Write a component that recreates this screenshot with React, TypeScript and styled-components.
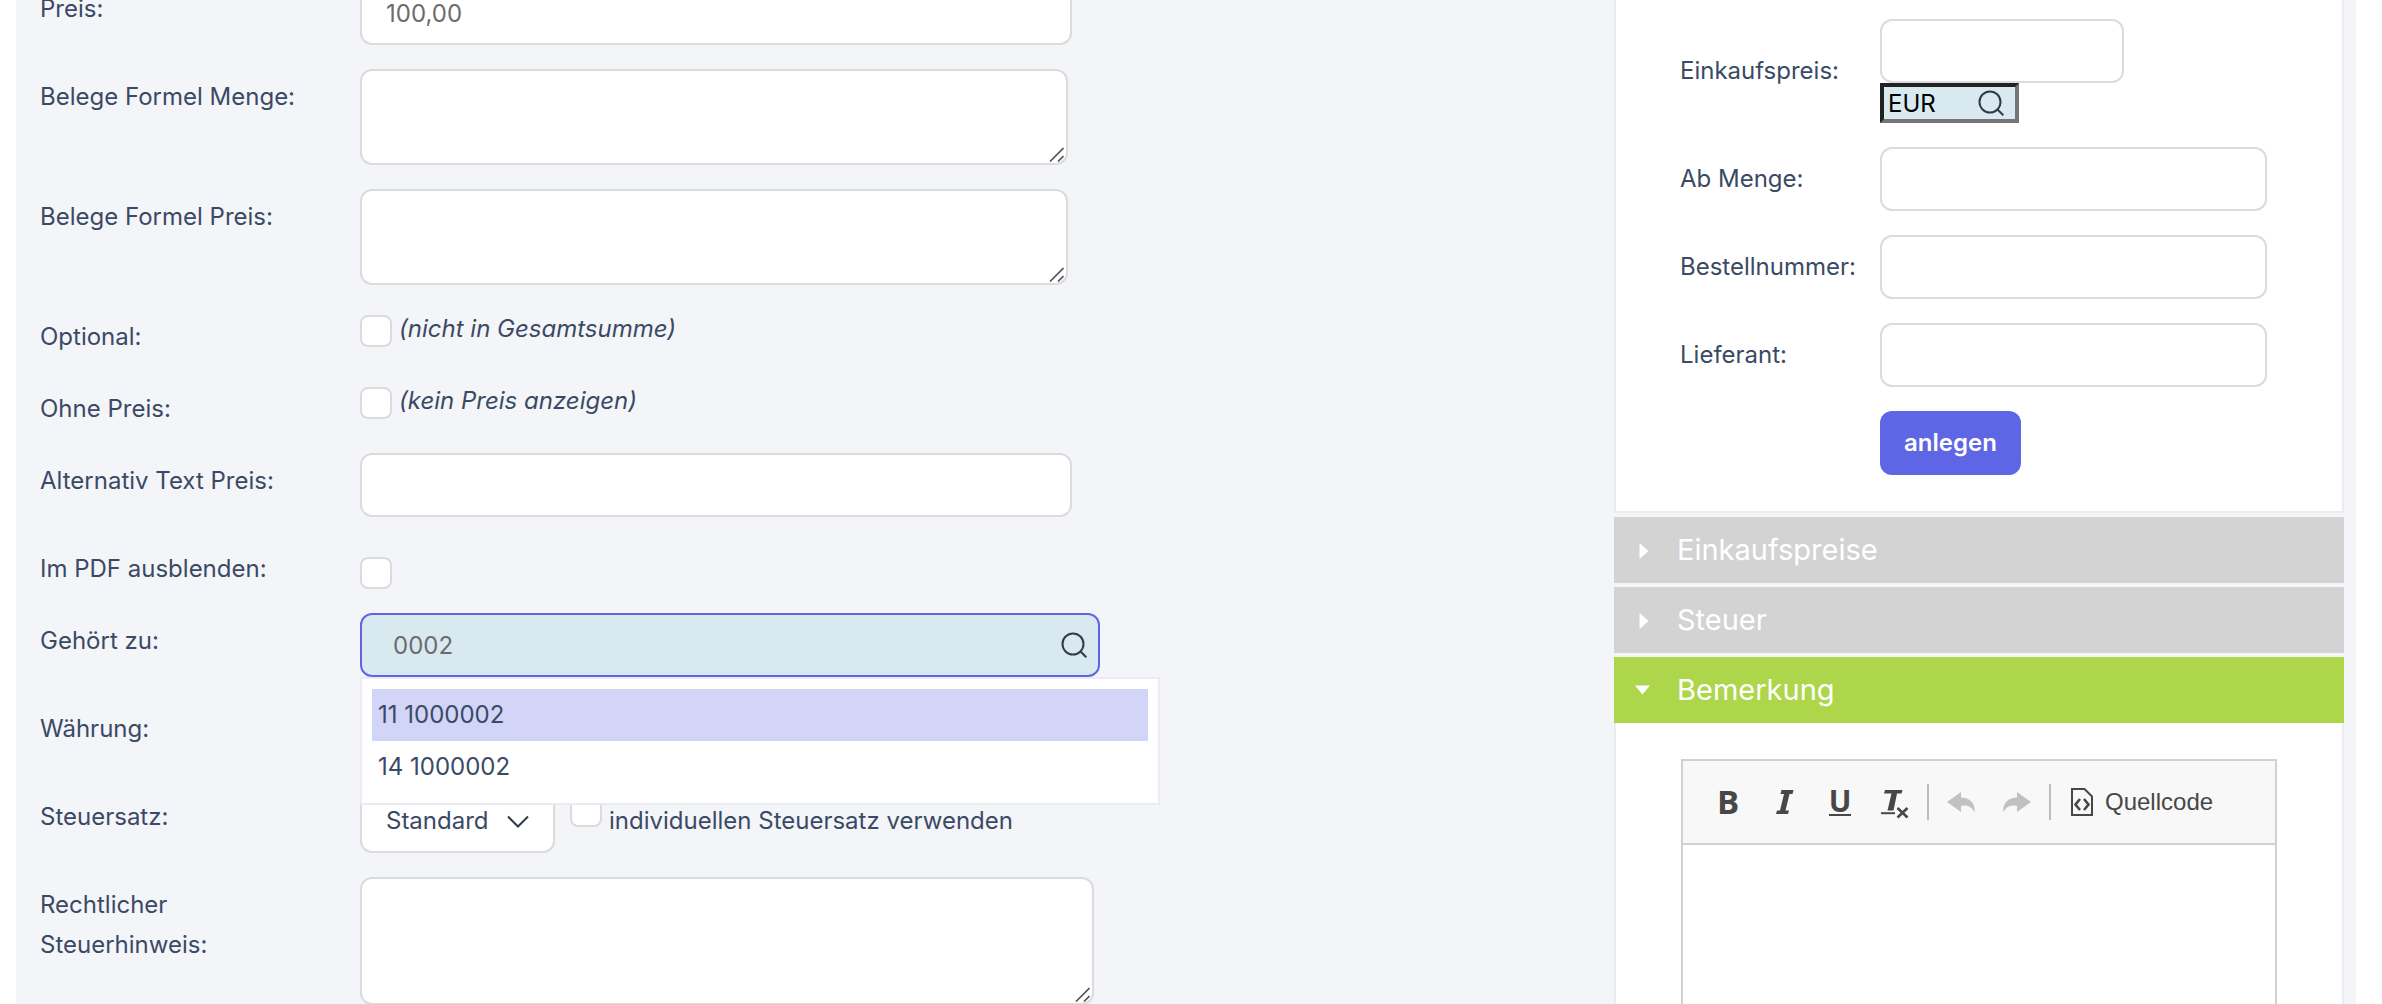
import React from 'react';
import styled, { createGlobalStyle, css } from 'styled-components';

const color = {
  panel: '#f4f5f9',
  frame: '#ebecf1',
  text: '#3b4a64',
  muted: '#6c6c6c',
  border: '#dbdbdb',
  accent: '#5f66e6',
  lookup: '#d9e9f0',
  highlight: '#d2d4f8',
  icon: '#2f3b4c',
  toolbarIcon: '#474747',
};

const GlobalStyle = createGlobalStyle`
  *, *::before, *::after { box-sizing: border-box; }
  body { margin: 0; background: #fff; }
  input, textarea, select, button { font: inherit; color: inherit; margin: 0; }
`;

const Page = styled.div`
  height: 100vh;
  overflow: hidden;
  padding: 0 26px 0 16px;
  font: 400 24px/40px Inter, 'Open Sans', sans-serif;
  color: ${color.text};
`;

const Panel = styled.main`
  display: grid;
  grid-template-columns: minmax(0, 1598fr) minmax(0, 730fr);
  min-height: 100%;
  padding-right: 12px;
  background: ${color.panel};
`;

/* The form is shown scrolled, its first row partly out of view. */
const Form = styled.form`
  display: flex;
  flex-direction: column;
  gap: 24px;
  margin-top: -19px;
  padding-left: 24px;
`;

const Row = styled.div`
  display: grid;
  grid-template-columns: 280px minmax(0, 1fr);
  column-gap: 40px;
  align-items: start;
`;

const Label = styled.label`
  padding-top: 8px;
`;

const fieldBox = css`
  display: block;
  max-width: 100%;
  background: #fff;
  border: 2px solid ${color.border};
  border-radius: 12px;
  outline: none;
`;

const TextInput = styled.input<{ $width: number }>`
  ${fieldBox}
  width: ${(p) => p.$width}px;
  height: 64px;
  padding: 0 24px;
  color: ${color.muted};
`;

const AreaWrap = styled.div<{ $width: number }>`
  position: relative;
  width: ${(p) => p.$width}px;
  max-width: 100%;
`;

const Area = styled.textarea<{ $height: number }>`
  ${fieldBox}
  width: 100%;
  height: ${(p) => p.$height}px;
  padding: 12px 24px;
  resize: none;
`;

const Grip = styled.svg`
  position: absolute;
  right: 4px;
  bottom: 3px;
  pointer-events: none;
`;

const CheckLine = styled.div<{ $bare?: boolean }>`
  display: flex;
  align-items: ${(p) => (p.$bare ? 'flex-end' : 'flex-start')};
  gap: 7px;
  min-height: 48px;
`;

const Checkbox = styled.input`
  appearance: none;
  flex: none;
  width: 32px;
  height: 32px;
  background: #fff;
  border: 2px solid ${color.border};
  border-radius: 8px;

  ${CheckLine} > &:not(:only-child) {
    margin-top: 6px;
  }
`;

const Hint = styled.label`
  font-style: italic;
`;

const Lookup = styled.div`
  position: relative;
  display: flex;
  align-items: center;
  width: 740px;
  height: 64px;
  padding-right: 11px;
  background: ${color.lookup};
  border: 2px solid ${color.accent};
  border-radius: 12px;
`;

const CurrencyLookup = styled.div`
  display: flex;
  align-items: center;
  width: 139px;
  height: 40px;
  padding-right: 11px;
  background: ${color.lookup};
  border: 4px solid;
  border-color: #222 #757575 #757575 #222;
`;

const BareInput = styled.input<{ $indent: number; $color: string }>`
  flex: 1;
  min-width: 0;
  height: 100%;
  padding: 0 0 0 ${(p) => p.$indent}px;
  color: ${(p) => p.$color};
  background: none;
  border: 0;
  outline: none;
`;

const IconButton = styled.button`
  display: flex;
  flex: none;
  padding: 0;
  color: ${color.icon};
  background: none;
  border: 0;
`;

const Suggestions = styled.ul`
  position: absolute;
  z-index: 2;
  top: 62px;
  left: -2px;
  width: 800px;
  margin: 0;
  padding: 10px;
  list-style: none;
  background: #fff;
  border: 2px solid ${color.frame};
`;

const Suggestion = styled.li<{ $active?: boolean }>`
  padding-left: 6px;
  line-height: 52px;
  background: ${(p) => (p.$active ? color.highlight : 'transparent')};
`;

const TaxLine = styled.div`
  display: flex;
  gap: 15px;
`;

const SelectWrap = styled.div`
  position: relative;
`;

const Select = styled.select`
  ${fieldBox}
  appearance: none;
  height: 64px;
  padding: 0 64px 0 24px;
`;

const Chevron = styled.svg`
  position: absolute;
  top: 26px;
  right: 26px;
  color: ${color.icon};
  pointer-events: none;
`;

const TaxCheck = styled(CheckLine)`
  align-items: flex-start;

  label {
    margin-top: 12px;
  }
`;

const Side = styled.aside`
  display: flex;
  flex-direction: column;
  gap: 4px;
`;

const Card = styled.section`
  padding: 19px 64px 36px;
  background: #fff;
  border: 2px solid ${color.frame};
  border-top: 0;
`;

const PriceForm = styled.form`
  display: grid;
  grid-template-columns: 200px minmax(0, 1fr);
  row-gap: 24px;
  align-items: center;
`;

const Submit = styled.button`
  grid-column: 2;
  justify-self: start;
  height: 64px;
  padding: 0 24px;
  font-weight: 600;
  color: #fff;
  background: ${color.accent};
  border: 0;
  border-radius: 12px;
`;

const SectionHeader = styled.button<{ $open?: boolean }>`
  display: flex;
  align-items: center;
  gap: 26px;
  width: 100%;
  height: 66px;
  padding: 0 19px;
  font-size: 29px;
  text-align: left;
  color: #fff;
  background: ${(p) => (p.$open ? '#add64b' : '#d3d3d3')};
  border: 0;
`;

const OpenSection = styled.section`
  display: flex;
  flex: 1;
  flex-direction: column;
`;

const EditorCard = styled(Card)`
  flex: 1;
  padding: 36px 65px 0;
  border-bottom: 0;
`;

const Editor = styled.div`
  border: 2px solid #d1d1d1;
`;

const Toolbar = styled.div`
  display: flex;
  align-items: center;
  height: 84px;
  padding-left: 16px;
  background: #f8f8f8;
  border-bottom: 2px solid #d1d1d1;
`;

const ToolButton = styled.button`
  display: flex;
  align-items: center;
  gap: 6px;
  height: 56px;
  padding: 0 12px;
  font-family: 'Liberation Sans', Arial, sans-serif;
  color: ${color.toolbarIcon};
  background: none;
  border: 0;

  svg {
    overflow: visible;
  }

  &:disabled {
    color: #c1c1c1;
  }
`;

const Separator = styled.span`
  width: 2px;
  height: 36px;
  margin: 0 4px;
  background: #bcbcbc;
`;

const EditorText = styled.textarea`
  display: block;
  width: 100%;
  height: 400px;
  padding: 24px;
  border: 0;
  outline: none;
  resize: none;
`;

const SearchIcon = () => (
  <svg width="26" height="26" viewBox="0 0 26 26" fill="none" stroke="currentColor" strokeWidth="2" aria-hidden="true">
    <circle cx="12" cy="12" r="10.5" />
    <path d="M19.5 19.5 25.3 25.3" />
  </svg>
);

const TextArea = ({ id, width, height }: { id: string; width: number; height: number }) => (
  <AreaWrap $width={width}>
    <Area id={id} $height={height} />
    <Grip width="16" height="16" viewBox="0 0 16 16" stroke="#555" strokeWidth="1.7" aria-hidden="true">
      <path d="M2 15.5 15.5 2M10 15.5 15.5 10" />
    </Grip>
  </AreaWrap>
);

const Triangle = ({ open }: { open?: boolean }) => (
  <svg width="18" height="18" viewBox="0 0 18 18" fill="currentColor" aria-hidden="true">
    <path d={open ? 'M2 4.500H17L9.500 13.500Z' : 'M6.500 2V18L15.500 10Z'} />
  </svg>
);

const ToolIcon = ({ children }: { children: React.ReactNode }) => (
  <svg width="32" height="32" viewBox="0 0 32 32" fill="currentColor" aria-hidden="true">
    {children}
  </svg>
);

const glyph = { fontFamily: "'Open Sans', 'Noto Sans', sans-serif", fontWeight: 700, textAnchor: 'middle' as const };

export default function App() {
  return (
    <>
      <GlobalStyle />
      <Page>
        <Panel>
          <Form>
            <Row>
              <Label htmlFor="preis">Preis:</Label>
              <TextInput id="preis" $width={712} defaultValue="100,00" />
            </Row>
            <Row>
              <Label htmlFor="formelMenge">Belege Formel Menge:</Label>
              <TextArea id="formelMenge" width={708} height={96} />
            </Row>
            <Row>
              <Label htmlFor="formelPreis">Belege Formel Preis:</Label>
              <TextArea id="formelPreis" width={708} height={96} />
            </Row>
            <Row>
              <Label htmlFor="optional">Optional:</Label>
              <CheckLine>
                <Checkbox type="checkbox" id="optional" />
                <Hint htmlFor="optional">(nicht in Gesamtsumme)</Hint>
              </CheckLine>
            </Row>
            <Row>
              <Label htmlFor="ohnePreis">Ohne Preis:</Label>
              <CheckLine>
                <Checkbox type="checkbox" id="ohnePreis" />
                <Hint htmlFor="ohnePreis">(kein Preis anzeigen)</Hint>
              </CheckLine>
            </Row>
            <Row>
              <Label htmlFor="textPreis">Alternativ Text Preis:</Label>
              <TextInput id="textPreis" $width={712} />
            </Row>
            <Row>
              <Label htmlFor="pdf">Im PDF ausblenden:</Label>
              <CheckLine $bare>
                <Checkbox type="checkbox" id="pdf" />
              </CheckLine>
            </Row>
            <Row>
              <Label htmlFor="gehoertZu">Gehört zu:</Label>
              <Lookup>
                <BareInput id="gehoertZu" $indent={31} $color={color.muted} defaultValue="0002" />
                <IconButton type="button" aria-label="Suchen">
                  <SearchIcon />
                </IconButton>
                <Suggestions>
                  <Suggestion $active>11 1000002</Suggestion>
                  <Suggestion>14 1000002</Suggestion>
                </Suggestions>
              </Lookup>
            </Row>
            <Row>
              <Label htmlFor="waehrung">Währung:</Label>
              <TextInput id="waehrung" $width={712} />
            </Row>
            <Row>
              <Label htmlFor="steuersatz">Steuersatz:</Label>
              <TaxLine>
                <SelectWrap>
                  <Select id="steuersatz" defaultValue="Standard">
                    <option>Standard</option>
                  </Select>
                  <Chevron width="22" height="14" viewBox="0 0 22 14" fill="none" stroke="currentColor" strokeWidth="2" aria-hidden="true">
                    <path d="M1 1.500 11 11.500 21 1.500" />
                  </Chevron>
                </SelectWrap>
                <TaxCheck>
                  <Checkbox type="checkbox" id="individuell" />
                  <label htmlFor="individuell">individuellen Steuersatz verwenden</label>
                </TaxCheck>
              </TaxLine>
            </Row>
            <Row>
              <Label htmlFor="steuerhinweis">Rechtlicher Steuerhinweis:</Label>
              <TextArea id="steuerhinweis" width={734} height={128} />
            </Row>
          </Form>

          <Side>
            <Card>
              <PriceForm>
                <label htmlFor="ekPreis">Einkaufspreis:</label>
                <div>
                  <TextInput id="ekPreis" $width={244} />
                  <CurrencyLookup>
                    <BareInput aria-label="Währung" $indent={4} $color="#000" defaultValue="EUR" />
                    <IconButton type="button" aria-label="Suchen">
                      <SearchIcon />
                    </IconButton>
                  </CurrencyLookup>
                </div>
                <label htmlFor="abMenge">Ab Menge:</label>
                <TextInput id="abMenge" $width={387} />
                <label htmlFor="bestellnummer">Bestellnummer:</label>
                <TextInput id="bestellnummer" $width={387} />
                <label htmlFor="lieferant">Lieferant:</label>
                <TextInput id="lieferant" $width={387} />
                <Submit type="button">anlegen</Submit>
              </PriceForm>
            </Card>
            <SectionHeader type="button" aria-expanded={false}>
              <Triangle />
              Einkaufspreise
            </SectionHeader>
            <SectionHeader type="button" aria-expanded={false}>
              <Triangle />
              Steuer
            </SectionHeader>
            <OpenSection>
              <SectionHeader type="button" $open aria-expanded>
                <Triangle open />
                Bemerkung
              </SectionHeader>
              <EditorCard>
                <Editor>
                  <Toolbar role="toolbar">
                    <ToolButton type="button" aria-label="Fett">
                      <ToolIcon>
                        <text x="17" y="28" fontSize="33" {...glyph}>B</text>
                      </ToolIcon>
                    </ToolButton>
                    <ToolButton type="button" aria-label="Kursiv">
                      <ToolIcon>
                        <path d="M14.500 4H26.500L25.500 8H22.500L18.500 24.500H22L21 28H9L10 24.500H13L17 8H13.500Z" />
                      </ToolIcon>
                    </ToolButton>
                    <ToolButton type="button" aria-label="Unterstrichen">
                      <ToolIcon>
                        <text x="17" y="25.500" fontSize="30" {...glyph}>U</text>
                        <path d="M6 28H28V30H6Z" />
                      </ToolIcon>
                    </ToolButton>
                    <ToolButton type="button" aria-label="Formatierung entfernen">
                      <ToolIcon>
                        <path d="M6 4H23.500L22.500 7.500H18L14.500 24.500H8.500L12.500 7.500H5Z" />
                        <path d="M2 26.200H16V28.200H2Z" />
                        <path d="M18.500 22 28.500 31.500M28.500 22 18.500 31.500" stroke="currentColor" strokeWidth="2.600" />
                      </ToolIcon>
                    </ToolButton>
                    <Separator />
                    <ToolButton type="button" aria-label="Rückgängig" disabled>
                      <ToolIcon>
                        <path d="M16 6 2 16 16 26V20C22 18.500 27 20.500 29.500 26.500 31 17 24 11.500 16 11.500Z" />
                      </ToolIcon>
                    </ToolButton>
                    <ToolButton type="button" aria-label="Wiederherstellen" disabled>
                      <ToolIcon>
                        <path d="M16 6 30 16 16 26V20C10 18.500 5 20.500 2.500 26.500 1 17 8 11.500 16 11.500Z" />
                      </ToolIcon>
                    </ToolButton>
                    <Separator />
                    <ToolButton type="button">
                      <ToolIcon>
                        <g fill="none" stroke="currentColor">
                          <path d="M5 3H17.500L25 10.500V29H5Z" strokeWidth="2" />
                          <path d="M13 13 8.500 18.500 13 24M17 13 21.500 18.500 17 24" strokeWidth="2.600" />
                        </g>
                      </ToolIcon>
                      Quellcode
                    </ToolButton>
                  </Toolbar>
                  <EditorText aria-label="Bemerkung" />
                </Editor>
              </EditorCard>
            </OpenSection>
          </Side>
        </Panel>
      </Page>
    </>
  );
}
